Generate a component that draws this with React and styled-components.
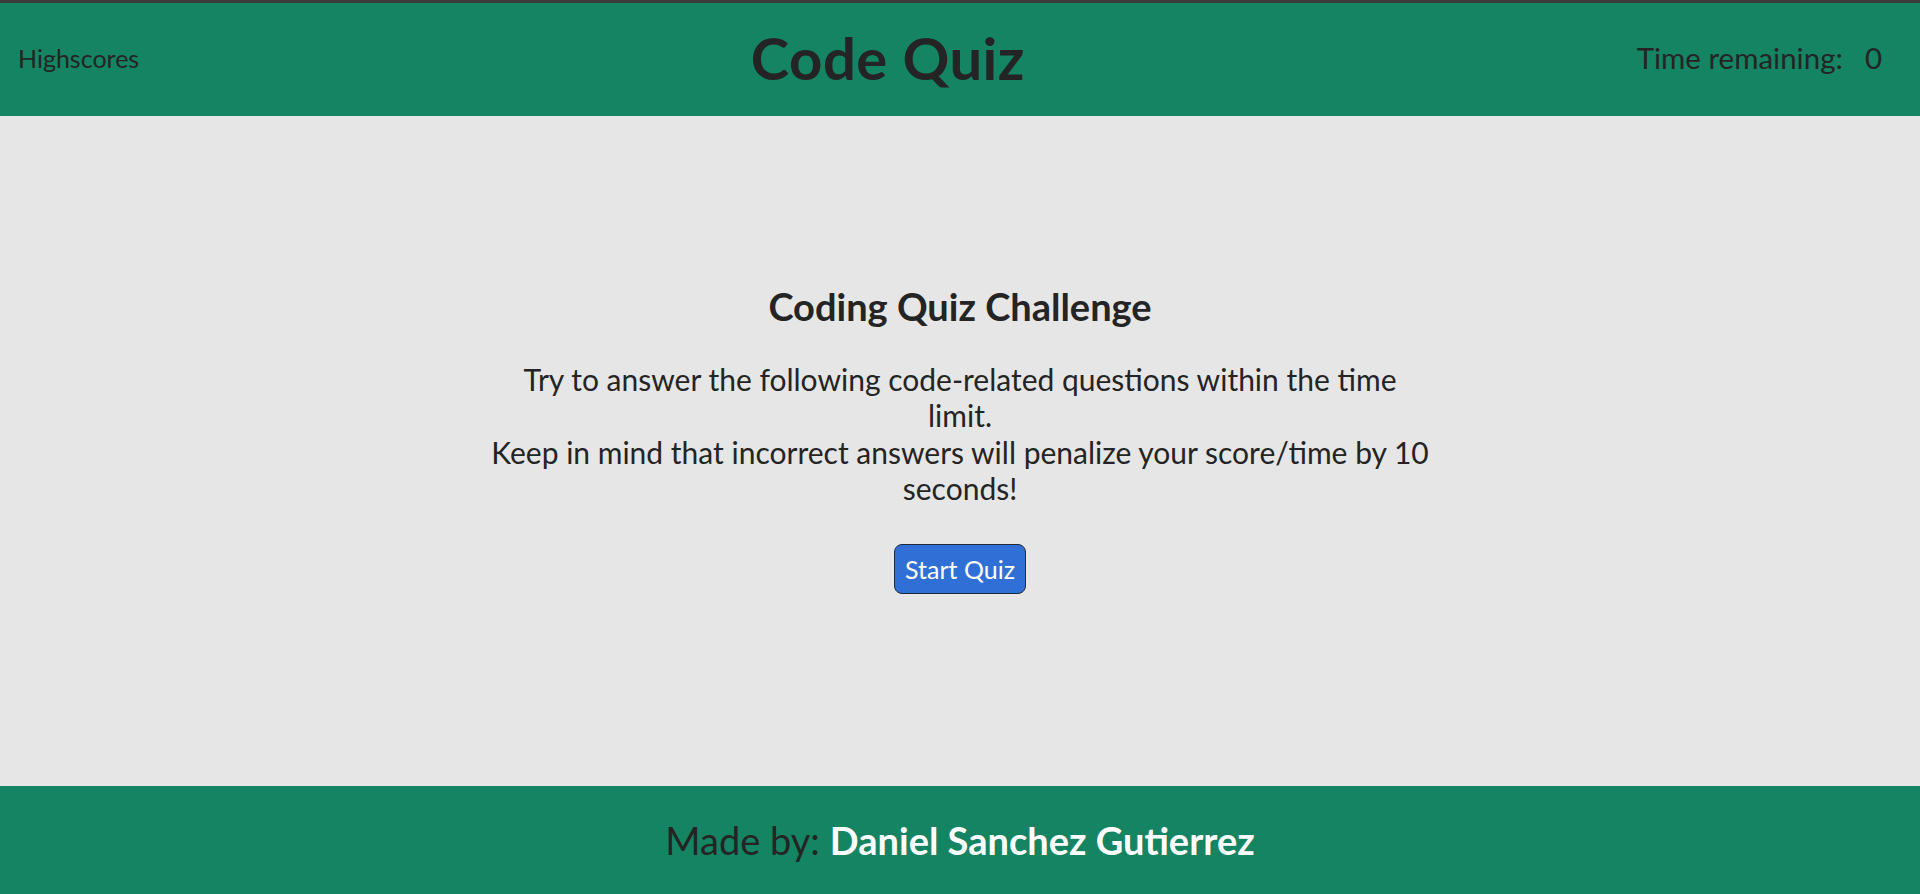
import React from "react";
import styled, { createGlobalStyle } from "styled-components";

const Global = createGlobalStyle`
  html, body { margin: 0; padding: 0; }
  body { background: #e6e6e6; color: #242424; font-family: "Lato", "Open Sans", sans-serif; }
  #root { min-height: 100vh; }
`;

const Page = styled.div`
  display: flex;
  flex-direction: column;
  height: 894px;
`;

const Header = styled.header`
  display: flex;
  justify-content: space-between;
  align-items: center;
  height: 113px;
  box-sizing: content-box;
  background: #148462;
  border-top: 3px solid #3b3b3b;
  padding: 0 38px 0 18px;
  font-family: "Lato", sans-serif;
  color: #242424;
`;

const NavLink = styled.a`
  font-size: 25px;
  color: #242424;
  text-decoration: none;
  margin-bottom: 4px;
`;

const Title = styled.h1`
  margin: 0 0 4px;
  font-size: 58px;
  font-weight: 700;
  letter-spacing: 0.5px;
`;

const Timer = styled.div`
  display: flex;
  gap: 22px;
  font-size: 29.5px;
  margin-bottom: 4px;
`;

const Main = styled.main`
  flex: 1;
  display: flex;
  flex-direction: column;
  align-items: center;
  justify-content: center;
  text-align: center;
  font-family: "Lato", sans-serif;
  padding-bottom: 24px;
`;

const Heading = styled.h2`
  margin: 0 0 31px;
  font-size: 38px;
  line-height: 1.2;
  font-weight: 700;
`;

const Intro = styled.p`
  margin: 0 0 37px;
  width: 938px;
  font-size: 30px;
  line-height: 36.5px;
`;

const StartButton = styled.button`
  font-family: "Lato", sans-serif;
  font-size: 25px;
  color: #fff;
  background: #3070d6;
  border: 1px solid #1f2a3a;
  border-radius: 8px;
  height: 50px;
  padding: 0 10px;
  cursor: pointer;
`;

const Footer = styled.footer`
  height: 108px;
  display: flex;
  align-items: center;
  justify-content: center;
  background: #148462;
  font-family: "Lato", sans-serif;
  font-size: 38px;
  color: #242424;
`;

const Name = styled.strong`
  color: #fff;
  font-weight: 700;
  margin-left: 10px;
`;

export default function App() {
  return (
    <>
      <Global />
      <Page>
        <Header>
          <NavLink href="#">Highscores</NavLink>
          <Title>Code Quiz</Title>
          <Timer>
            <span>Time remaining:</span>
            <span>0</span>
          </Timer>
        </Header>
        <Main>
          <Heading>Coding Quiz Challenge</Heading>
          <Intro>
            Try to answer the following code-related questions within the time limit.
            <br />
            Keep in mind that incorrect answers will penalize your score/time by 10 seconds!
          </Intro>
          <StartButton>Start Quiz</StartButton>
        </Main>
        <Footer>
          Made by:<Name>Daniel Sanchez Gutierrez</Name>
        </Footer>
      </Page>
    </>
  );
}
